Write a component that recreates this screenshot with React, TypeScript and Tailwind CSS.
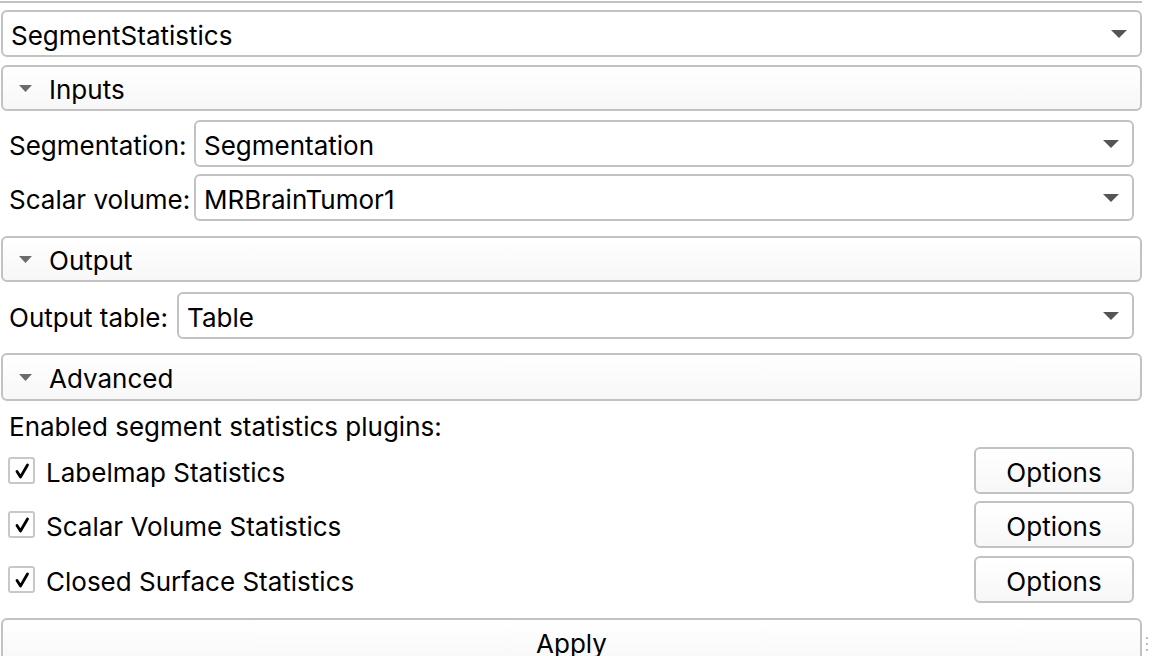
import React from "react";

const T = ({ children, className = "" }: { children: React.ReactNode; className?: string }) => (
  <span className={"translate-y-[2px] " + className}>{children}</span>
);

const Arrow = () => (
  <svg width="16" height="8" viewBox="0 0 16 8" className="shrink-0">
    <path d="M0 0 L16 0 L8 8 Z" fill="#555555" />
  </svg>
);

const SmallArrow = () => (
  <svg width="13" height="7" viewBox="0 0 13 7" className="shrink-0">
    <path d="M0 0 L13 0 L6.5 7 Z" fill="#6b6b6b" />
  </svg>
);

const Combo = ({ text, className = "" }: { text: string; className?: string }) => (
  <div
    className={
      "flex items-center justify-between rounded-[6px] border-2 border-[#c2c2c2] bg-white pl-[8px] pr-[13px] " +
      className
    }
  >
    <T>{text}</T>
    <Arrow />
  </div>
);

const Section = ({ title, className = "" }: { title: string; className?: string }) => (
  <div
    className={
      "ml-[1px] flex w-[1141px] items-center rounded-[6px] border-2 border-[#c2c2c2] bg-gradient-to-b from-white to-[#f7f7f7] pl-[16px] " +
      className
    }
  >
    <SmallArrow />
    <T className="ml-[17px]">{title}</T>
  </div>
);

const Check = () => (
  <div className="flex h-[27px] w-[27px] items-center justify-center rounded-[3px] border-2 border-[#c8c8c8] bg-white">
    <svg width="16" height="16" viewBox="0 0 16 16">
      <path d="M3 8.5 L6.5 14 L13.5 2" fill="none" stroke="#000" strokeWidth="2.8" strokeLinecap="round" strokeLinejoin="round" />
    </svg>
  </div>
);

const Plugin = ({ label, className = "" }: { label: string; className?: string }) => (
  <div className={"flex items-center " + className}>
    <div className="ml-[8px]">
      <Check />
    </div>
    <T className="ml-[11px] flex-1">{label}</T>
    <div className="mr-[18px] flex h-[47px] w-[160px] items-center justify-center rounded-[6px] border-2 border-[#c2c2c2] bg-gradient-to-b from-white to-[#f7f7f7]">
      <T>Options</T>
    </div>
  </div>
);

export default function App() {
  return (
    <div
      className="relative h-[656px] w-[1152px] overflow-hidden bg-white text-[26px] leading-none text-black"
      style={{ fontFamily: "Inter, 'Noto Sans', sans-serif" }}
    >
      <div className="h-[3px] w-[1142px] border-b-2 border-[#c2c2c2]" />
      <Combo text="SegmentStatistics" className="ml-[1px] mt-[7px] h-[47px] w-[1141px]" />
      <Section title="Inputs" className="mt-[8px] h-[46px]" />
      <div className="mt-[9px] flex items-center">
        <T className="ml-[9px] w-[185px]">Segmentation:</T>
        <Combo text="Segmentation" className="h-[47px] w-[940px]" />
      </div>
      <div className="mt-[7px] flex items-center">
        <T className="ml-[9px] w-[185px]">Scalar volume:</T>
        <Combo text="MRBrainTumor1" className="h-[47px] w-[940px]" />
      </div>
      <Section title="Output" className="mt-[15px] h-[46px]" />
      <div className="mt-[10px] flex items-center">
        <T className="ml-[9px] w-[168px]">Output table:</T>
        <Combo text="Table" className="h-[47px] w-[957px]" />
      </div>
      <Section title="Advanced" className="mt-[14px] h-[48px]" />
      <div className="ml-[9px] mt-[13px] h-[26px]">Enabled segment statistics plugins:</div>
      <Plugin label="Labelmap Statistics" className="mt-[7px]" />
      <Plugin label="Scalar Volume Statistics" className="mt-[7px]" />
      <Plugin label="Closed Surface Statistics" className="mt-[8px]" />
      <div className="ml-[1px] mt-[15px] flex h-[50px] w-[1141px] justify-center rounded-[6px] border-2 border-[#c2c2c2] bg-gradient-to-b from-white to-[#f7f7f7] pt-[11px]">
        Apply
      </div>
      <div className="absolute left-[1146px] top-[637px] flex flex-col gap-[4px]">
        <div className="h-[2px] w-[2px] bg-[#bbb]" />
        <div className="h-[2px] w-[2px] bg-[#bbb]" />
        <div className="h-[2px] w-[2px] bg-[#bbb]" />
      </div>
    </div>
  );
}
